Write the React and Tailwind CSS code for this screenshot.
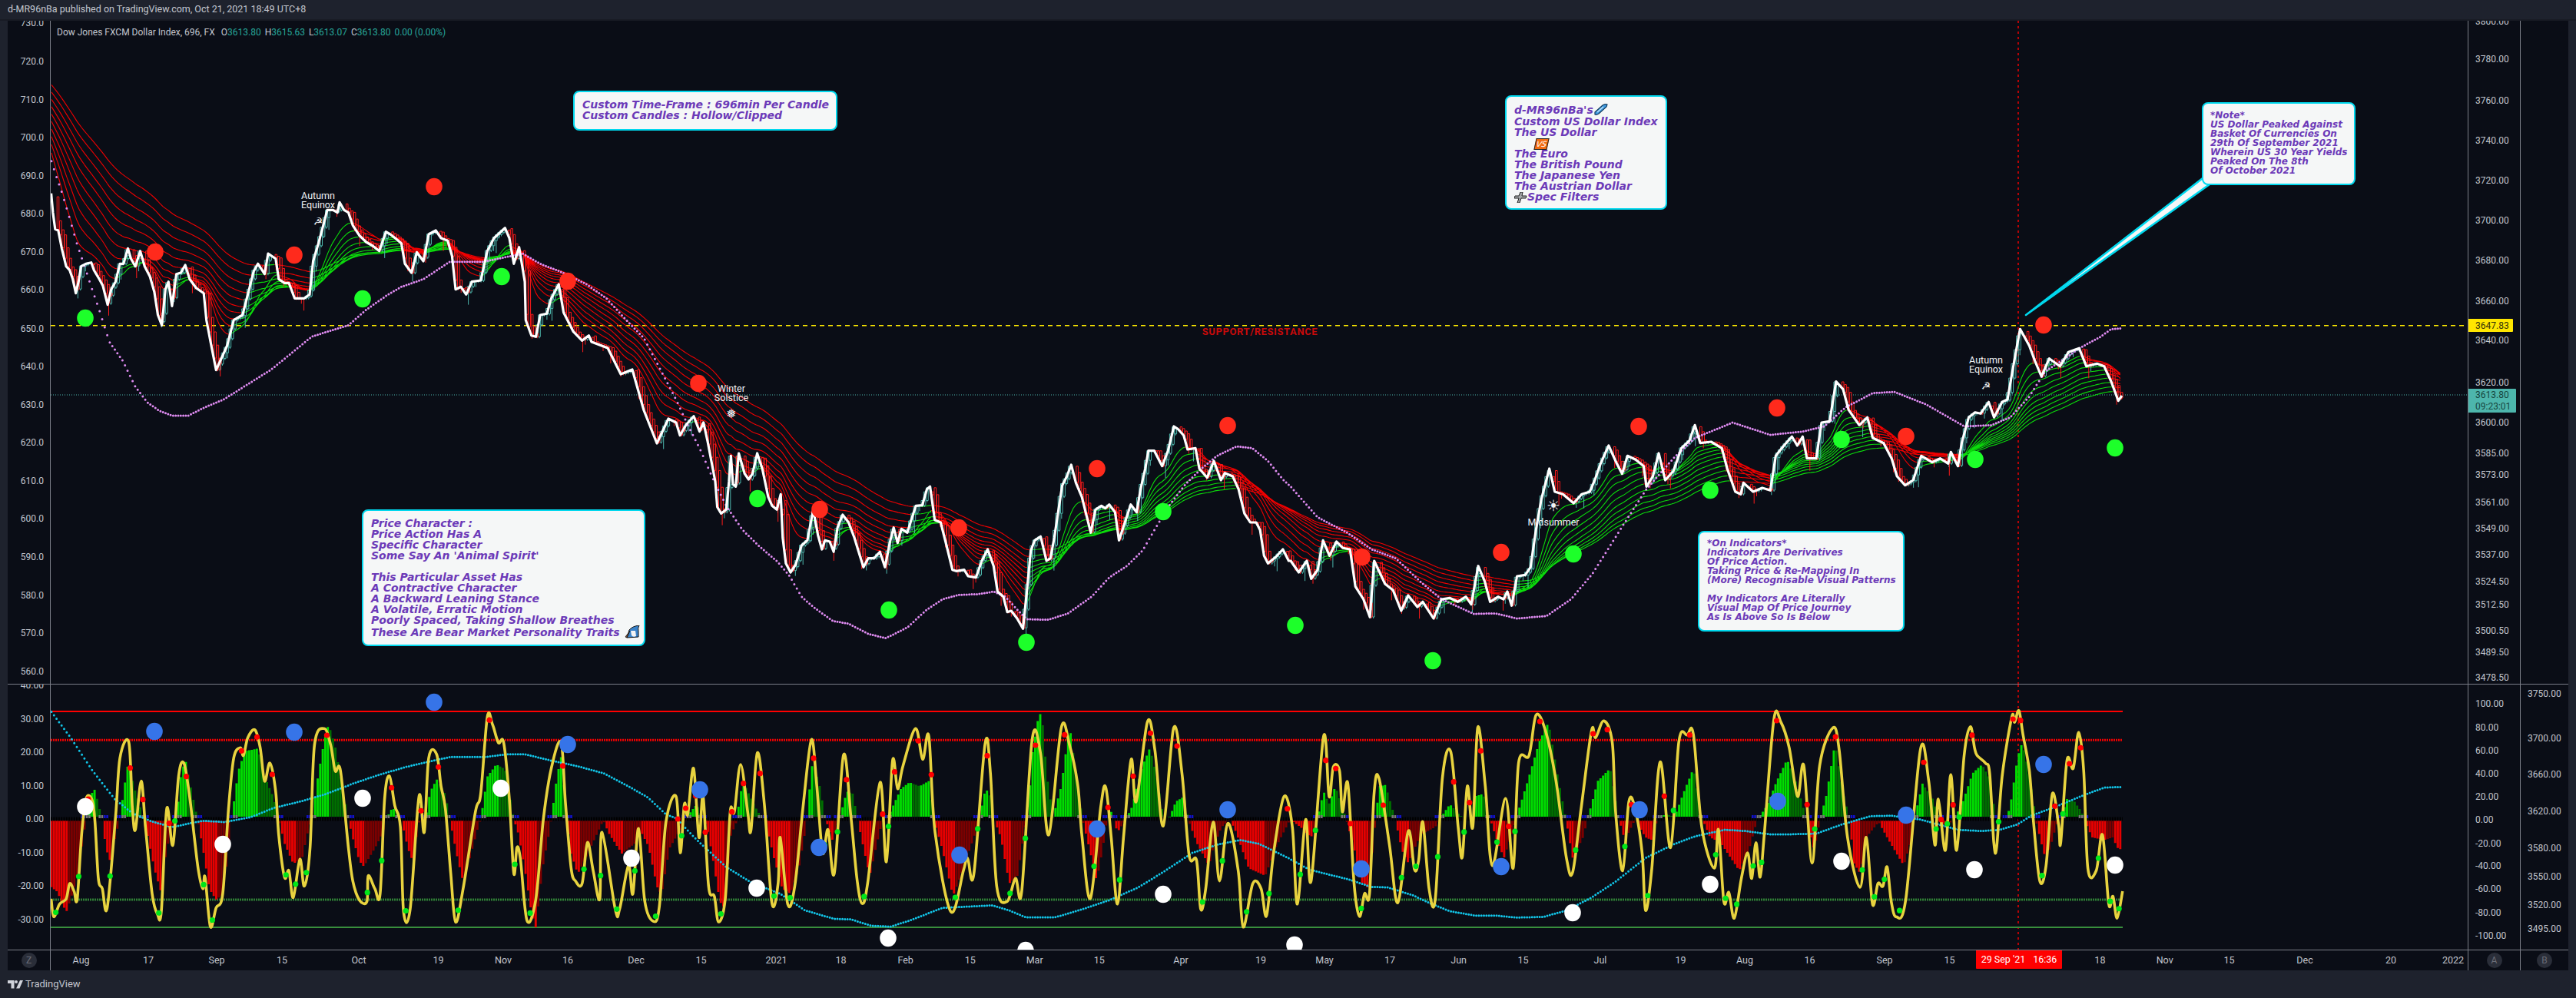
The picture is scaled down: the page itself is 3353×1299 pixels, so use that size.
const pairs = (flat) => {
  const out = [];
  for (let i = 0; i < flat.length; i += 2) out.push([flat[i], flat[i + 1]]);
  return out;
};

// values were read off crops of the chart, so each block has its own origin and x scale
const crop = (x0, y0, sx, flat) => pairs(flat).map(([x, y]) => [x0 + x / sx, y0 + y / 3]);

const PRICE = [
  ...crop(0, 0, 1.742, [116,755,120,830,125,895,132,900,140,970,150,1040,158,1055,165,1090,172,1145,178,1100,184,1040,195,1030,207,1025,213,1055,225,1090,233,1115,244,1190,252,1130,262,1100,272,1030,280,1030,290,970,297,1010,307,1040,318,980,328,1040,340,1080,350,1140,358,1230,367,1270,375,1130,382,1100,390,1195,400,1070,410,1065,420,1035,430,1090,445,1125,462,1145,468,1250,478,1340,490,1445,515,1350,530,1250,550,1230,565,1130,575,1060,585,1030,600,1070,608,990,625,1010,632,1090,645,1105,655,1105,668,1165,690,1165,702,1150,710,1020,722,950,733,880,742,820,755,820,765,830,770,790,780,820,790,830,800,880,815,920,830,945,845,960,860,980,875,905,885,915,900,935,910,950,918,1030,933,1065,945,985,960,1020,972,915,988,900,1000,930,1015,940,1025,1000,1033,1130,1045,1120,1057,1150,1070,1100,1090,1095,1105,980,1120,930,1145,890,1155,930,1165,1030,1177,965,1190,1100,1192,1250,1205,1310,1215,1315,1225,1230,1240,1225,1250,1165,1267,1110,1278,1220,1300,1295,1320,1330,1335,1310]),
  ...pairs([770,445,791,453,808,487,823,481,838,534,855,577,870,545]),
  ...crop(880, 440, 1.96, [0,330,10,380,25,340,45,305,60,365,70,330,80,400,90,480,100,560,105,660,115,685,128,670,135,560,140,460,145,570,152,580,160,450,175,530,185,552,195,530,207,450,220,510,235,620,245,655,257,670,267,610,272,780,280,880,292,915,305,885,320,810,335,790,350,670,362,770,372,825,380,790,392,795,402,835,412,740,425,690,440,720,455,780,465,830,478,895,490,860,505,860,520,835,533,895,545,800,555,740,565,800,575,745,590,760,600,710,612,655,628,653,640,590,648,580,660,710,675,720,690,810,705,905,715,910,735,905,745,930,765,935,780,870,795,825,810,890,820,990,835,1010,845,1070,855,1065,870,1095,885,1135,895,990,905,830,915,790,930,775,945,870,955,860,965,780,985,575,997,540,1008,495,1020,565,1035,620,1058,760,1070,670,1085,655,1095,665,1105,650,1120,680,1130,790,1145,720,1160,650,1175,680,1185,590,1197,510,1205,440,1220,440,1240,500,1255,440,1270,345,1280,355,1295,380,1305,435,1325,430,1335,510,1355,545,1372,480,1390,555,1400,527,1420,540,1435,590,1450,685,1465,720,1480,720,1490,750,1500,850,1510,880,1530,855,1548,825,1563,870]),
  ...crop(1680, 440, 1.4255, [0,870,15,915,30,870,38,940,50,905,60,790,72,850,85,795,97,820,110,825,120,970,135,1020,147,1090,155,870,175,960,190,985,205,1065,218,1005,235,1050,245,1030,265,1095,280,1020,295,1015,310,1030,325,1010,335,1040,348,890,360,950,370,1030,385,1010,395,1020,402,990,410,1045,420,930,435,925,445,895,455,750,465,630,480,510,490,600,505,610,525,645,540,610,555,600,565,550,575,490,590,420,605,490,615,530,625,460,640,475,655,500,660,580,672,540,683,450,695,555,710,520,725,430,740,400,750,340,760,410,780,405,800,430,810,510,825,600,835,610,840,565,858,600,875,585,890,595,900,460,915,420,930,385,940,420,950,385,958,470,975,470,985,330,1000,325,1012,170,1025,200,1035,280,1055,340,1070,310,1080,390,1100,410,1115,470,1125,540,1140,575,1155,555,1170,460,1190,485,1205,470,1220,490,1225,445,1238,500,1245,410,1258,310,1270,290,1280,295,1295,250,1305,310,1320,250,1330,240,1340,120]),
  ...crop(1900, 100, 1.079, [787,985,800,1050,808,1110,817,1170,828,1100,843,1130,855,1075,870,1060,880,1130,895,1120,905,1130,915,1190,925,1265,930,1245]),
];

const PINK = [
  ...crop(0, 0, 1.742, [116,625,125,675,140,750,155,835,175,955,190,1030,205,1110,225,1210,248,1335]),
  ...pairs([160,470,176,503,192,524,208,535,224,541,245,541,267,530,291,520,353,481,406,438]),
  ...crop(0, 0, 1.742, [790,1270,830,1210,880,1150,910,1120,960,1090,1020,1022,1095,1022,1130,1010,1185,990,1225,1030,1270,1060,1330,1110,1375,1165,1420,1250,1460,1320]),
  ...crop(880, 440, 1.96, [0,240,30,340,60,430,100,570,130,660,170,750,210,810,260,875,290,930,320,1010,350,1050,400,1105,440,1115,490,1155,535,1172,590,1130,640,1060,680,1020,720,1003,770,1000,810,990,840,1010,870,1060,895,1098,950,1100,1000,1075,1060,1010,1105,935,1150,890,1190,830,1220,750,1260,650,1300,570,1340,510,1380,460,1430,423,1470,430,1510,480,1550,555]),
  ...crop(1680, 440, 1.4255, [0,580,50,700,105,760,150,825,195,860,240,950,280,1020,340,1077,380,1075,420,1095,475,1085,520,1020,560,920,620,720,660,590,710,470,750,390,820,330,890,378,950,365,990,345,1030,270,1080,215,1120,210,1180,260,1250,345,1300,340,1335,310,1370,230,1400,130,1440,75]),
  ...crop(1900, 100, 1.079, [870,1060,900,1015,915,985,930,982]),
];

const HIST = [
  ...crop(0, 871, 1.742, [116,850,130,870,150,950,160,900,172,830,185,700,195,586,205,490,215,470,225,540,232,586,240,700,250,750,262,650,272,586,280,480,292,350,302,450,315,520,325,586,335,650,350,780,365,870,378,700,392,620,400,586,410,420,420,350,435,480,448,586,460,700,475,860,490,900,505,880,515,750,525,586,540,400,555,320,585,310,600,420,620,500,632,586,645,680,665,760,685,740,700,620,708,586,720,430,735,280,745,215,760,300,775,450,790,586,800,660,815,750,825,770,850,700,868,640,875,586,890,540,900,560,910,586,925,700,938,760,948,600,965,586,975,480,990,430,1010,490,1020,586,1035,720,1050,830,1065,740,1082,630,1090,586,1105,420,1125,372,1145,390,1165,586,1175,640,1190,780,1205,950,1215,1010,1230,780,1245,640,1250,586,1262,430,1272,340,1285,586,1295,720,1310,800,1330,730,1352,650,1368,590,1380,640,1410,720,1440,680,1452,630,1470,690,1490,850,1500,880,1518,700]),
  ...crop(880, 890, 1.845, [35,500,50,470,62,522,75,560,90,700,105,850,118,880,130,600,145,540,150,480,160,380,175,430,190,480,205,522,215,540,235,680,255,800,275,820,295,720,315,530,320,420,328,300,345,400,358,522,375,610,390,540,400,480,410,420,425,430,435,522,450,640,465,750,480,640,495,540,510,522,520,480,540,410,560,385,585,400,607,380,618,522,640,650,665,830,690,720,715,600,728,530,740,430,750,410,762,522,780,600,800,780,820,750,838,560,845,522,855,280,870,130,878,110,890,350,905,522,925,400,945,160,960,350,975,522,995,660,1010,770,1025,640,1035,530,1045,500,1060,580,1080,530,1095,480,1120,320,1138,250,1155,370,1170,522,1185,522,1200,460,1220,440,1230,530,1250,620,1280,710,1290,640,1310,560,1330,530,1345,580,1375,720,1415,750,1440,640,1475,530,1500,560,1525,600,1540,530,1555,420,1568,470]),
  ...crop(1730, 890, 1.845, [15,400,40,522,60,640,75,770,95,800,112,530,120,400,135,395,158,522,175,650,190,700,220,590,255,560,265,530,290,470,315,515,340,530,350,440,370,430,387,530,405,620,420,680,440,580,452,510,475,390,505,225,527,150,550,370,568,522,585,680,610,600,622,520,645,380,675,330,695,522,710,610,735,530,760,600,775,610,790,520,810,510,830,520,850,430,875,330,895,522,915,600,940,620,985,730,1010,640,1028,530,1050,480,1075,380,1100,295,1125,400,1145,522,1165,650,1180,522,1195,430,1215,230,1235,430,1250,530,1260,700,1275,740,1290,600,1320,540,1340,600,1380,710,1400,600,1405,530,1425,390,1450,450,1465,530,1480,560,1500,530,1520,470,1545,350,1568,315]),
  ...crop(2500, 870, 1.838, [165,430,180,590,205,590,215,530,232,345,243,290,258,400,270,520,275,590,290,690,298,740,310,700,325,610,335,590,350,510,368,520,385,560,392,590,410,660,440,670,460,660,470,700,485,712]),
];

const OSC = [
  ...crop(0, 870, 1.742, [116,900,122,970,135,920,150,900,158,840,168,870,175,900,185,650,195,510,208,510,215,590,223,820,232,860,243,935,262,580,272,350,292,288,300,540,307,630,320,440,330,620,345,880,357,960,366,945,378,548,392,690,405,420,417,370,430,500,440,650,450,790,460,860,465,815,477,1008,490,935,505,880,518,550,530,350,545,310,552,340,562,270,578,240,590,310,600,440,612,370,625,480,632,650,645,815,655,790,665,895,680,745,690,850,703,700,713,300,735,235,750,300,760,400,772,400,790,700,800,830,815,905,832,910,835,810,850,860,862,880,872,510,883,420,895,535,908,620,915,950,930,940,950,500,962,640,972,350,990,335,1000,460,1010,550,1022,800,1033,990,1050,860,1078,560,1090,490,1105,190,1117,220,1130,290,1142,290,1155,510,1165,800,1172,700,1180,745,1195,985,1215,900,1232,590,1250,390,1272,288,1282,520,1295,780,1305,830,1320,840,1332,680,1345,790,1360,900,1365,640,1395,940,1405,940,1425,770,1435,880,1448,625,1462,910,1482,988,1495,930,1510,600]),
  ...crop(880, 890, 1.845, [0,440,10,660,20,470,28,510,42,330,55,600,65,440,78,790,92,830,102,930,118,840,130,500,140,500,155,315,172,500,180,570,195,270,212,470,230,855,245,780,250,600,268,860,285,790,305,480,325,218,338,400,352,660,365,570,380,740,402,278,420,520,435,770,447,858,460,780,490,385,505,695,520,300,532,410,545,320,575,175,592,295,607,205,622,580,660,890,690,730,700,680,715,745,742,235,755,350,770,790,795,850,815,760,830,810,855,220,875,270,895,590,925,172,945,240,965,400,975,600,995,838,1020,480,1032,405,1045,600,1060,860,1075,590,1093,295,1105,460,1132,148,1150,260,1170,555,1195,172,1215,350,1232,670,1250,690,1260,880,1272,800,1290,540,1305,770,1325,545,1350,730,1362,950,1385,780,1405,800,1418,905,1435,660,1460,440,1480,560,1492,860,1512,530,1525,770,1555,205]),
  ...crop(1730, 890, 1.845, [0,440,10,325,25,340,32,500,45,390,60,780,73,908,85,820,97,820,108,430,120,370,145,630,165,855,190,575,205,725,215,690,225,540,240,800,255,840,272,370,292,265,310,560,320,675,332,400,345,560,357,170,375,400,392,710,424,448,442,720,455,310,480,280,497,122,520,185,545,380,570,680,585,735,605,490,630,185,640,210,660,145,680,230,688,500,705,730,720,460,735,490,752,665,760,885,775,720,795,305,820,640,840,225,860,200,875,200,895,560,925,720,935,570,948,850,960,815,973,915,990,760,1005,660,1015,760,1025,620,1035,755,1045,590,1068,140,1085,150,1105,250,1125,440,1140,320,1160,700,1178,320,1210,172,1225,260,1245,600,1275,795,1290,600,1305,860,1318,780,1330,790,1340,715,1350,850,1362,910,1385,840,1420,258,1440,380,1455,630,1463,450,1480,650,1493,355,1507,650,1525,280,1540,168,1550,250]),
  ...crop(2500, 870, 1.838, [135,340,155,370,165,410,175,680,182,695,195,420,218,190,225,210,235,165,245,260,260,400,270,600,285,830,300,770,315,490,330,610,335,680,350,360,365,390,378,250,390,400,400,780,420,790,435,650,450,920,460,890,470,975,483,870]),
];

const CYAN = [
  ...crop(0, 870, 1.742, [116,168,160,270,210,400,260,510,300,565,340,595,390,620,430,605,460,595,510,600,570,580,620,545,680,520,740,490,800,450,860,415,920,385,970,365,1020,346,1100,346,1150,335,1190,335,1250,360,1310,382,1370,410,1430,465,1470,505,1510,570]),
  ...crop(880, 890, 1.845, [0,525,50,610,120,715,180,775,250,820,310,885,380,918,420,920,470,945,515,948,560,925,640,875,700,870,760,865,800,885,840,912,910,912,980,878,1040,845,1110,795,1170,735,1240,660,1300,628,1355,610,1400,625,1470,680,1520,725]),
  ...crop(1730, 890, 1.845, [0,745,50,765,100,793,140,795,200,825,240,855,290,888,350,905,400,905,450,913,515,910,570,885,630,835,690,770,760,680,830,625,880,595,950,570,1000,575,1060,588,1100,588,1170,585,1230,550,1300,517,1350,515,1420,530,1510,570,1568,575]),
  ...crop(2500, 870, 1.838, [190,630,230,610,265,575,330,535,390,495,440,465,483,463]),
];

const RED_DOTS = pairs([202,328,383,332,565,243,739,366,909,499,1067,663,1248,687,1428,610,1598,554,1773,725,1954,719,2133,555,2313,531,2481,568,2660,423]);
const GREEN_DOTS = pairs([111,414,472,389,653,360,986,649,1157,794,1336,836,1514,666,1686,814,1865,860,2048,721,2226,638,2397,572,2571,598,2753,583]);
const BLUE_DOTS = pairs([201,952,383,953,565,914,739,969,911,1028,1066,1103,1249,1113,1428,1079,1598,1054,1772,1131,1954,1128,2134,1054,2314,1043,2481,1061,2660,995]);
const WHITE_DOTS = pairs([111,1050,290,1099,472,1039,652,1026,822,1117,985,1156,1156,1221,1335,1237,1514,1164,1685,1230,2047,1188,2226,1151,2397,1121,2570,1132,2753,1126]);

const STEP = 3.3;
const START = 66;
const END = 2763;
const BARS = [];
for (let x = START + 1; x <= END; x += STEP) BARS.push(x);

const interp = (pts, x) => {
  if (x <= pts[0][0]) return pts[0][1];
  for (let i = 1; i < pts.length; i++) {
    if (x <= pts[i][0]) {
      const [x0, y0] = pts[i - 1];
      const [x1, y1] = pts[i];
      return y0 + ((y1 - y0) * (x - x0)) / (x1 - x0 || 1);
    }
  }
  return pts[pts.length - 1][1];
};

const poly = (pts) => pts.map((p) => `${p[0].toFixed(1)},${p[1].toFixed(1)}`).join(" ");

const smooth = (pts) => {
  let d = `M${pts[0][0].toFixed(1)} ${pts[0][1].toFixed(1)}`;
  for (let i = 0; i < pts.length - 1; i++) {
    const a = pts[i - 1] || pts[i];
    const b = pts[i];
    const c = pts[i + 1];
    const e = pts[i + 2] || c;
    const k = 6;
    d += `C${(b[0] + (c[0] - a[0]) / k).toFixed(1)} ${(b[1] + (c[1] - a[1]) / k).toFixed(1)} ${(c[0] - (e[0] - b[0]) / k).toFixed(1)} ${(c[1] - (e[1] - b[1]) / k).toFixed(1)} ${c[0].toFixed(1)} ${c[1].toFixed(1)}`;
  }
  return d;
};

const dots = (pts) =>
  BARS.filter((x) => x >= pts[0][0] && x <= pts[pts.length - 1][0])
    .map((x) => `M${x.toFixed(1)} ${interp(pts, x).toFixed(1)}h0`)
    .join("");

const PRICE_Y = BARS.map((x) => interp(PRICE, x));

function buildRibbon() {
  const periods = [14, 20, 26, 33, 40, 48, 56, 65, 75, 86];
  const paths = { red: "", darkRed: "", green: "", darkGreen: "" };
  periods.forEach((n, k) => {
    let e = 190 - (k * 83) / (periods.length - 1);
    const a = 2 / (n + 1);
    BARS.forEach((x, i) => {
      const next = e + a * (PRICE_Y[i] - e);
      const dy = next - e;
      const key = dy > 0.05 ? "red" : dy > 0 ? "darkRed" : dy < -0.05 ? "green" : "darkGreen";
      if (i > 0) paths[key] += `M${(x - STEP).toFixed(1)} ${e.toFixed(1)}L${x.toFixed(1)} ${next.toFixed(1)}`;
      e = next;
    });
  });
  return paths;
}

function buildCandles() {
  let up = "";
  let down = "";
  BARS.forEach((x, i) => {
    if (i < 2) return;
    const o = PRICE_Y[i - 2];
    const c = PRICE_Y[i];
    const wick = (i * 7) % 11 === 0 ? 16 : (i * 5) % 7 === 0 ? 7 : 2;
    const top = Math.min(o, c);
    const bottom = Math.max(o, c);
    const left = c < o ? x - 3.2 : x + 0.6;
    const box = `M${left.toFixed(1)} ${top.toFixed(1)}h2.6V${bottom.toFixed(1)}h-2.6zM${(left + 1.3).toFixed(1)} ${bottom.toFixed(1)}v${wick}`;
    if (c < o) up += box;
    else down += box;
  });
  return { up, down };
}

function buildHist() {
  const paths = { green: "", darkGreen: "", red: "", darkRed: "" };
  const base = 1066;
  const vals = BARS.map((x) => interp(HIST, x));
  vals.forEach((y, i) => {
    const x = BARS[i].toFixed(1);
    const grows = i === 0 || Math.abs(y - base) >= Math.abs(vals[i - 1] - base);
    if (y < base - 2) paths[grows ? "green" : "darkGreen"] += `M${x} 1063V${y.toFixed(1)}`;
    else if (y > base + 2) paths[grows ? "red" : "darkRed"] += `M${x} 1068V${y.toFixed(1)}`;
  });
  let blue = "";
  let grey = "";
  vals.forEach((y, i) => {
    const near = vals.slice(Math.max(0, i - 2), i + 3).some((v) => Math.sign(v - base) !== Math.sign(y - base));
    if (!near) return;
    const mark = `M${BARS[i].toFixed(1)} 1061v4`;
    if (y < base) grey += mark;
    else blue += mark;
  });
  return { ...paths, blue, grey };
}

function turningDots() {
  const red = [];
  const green = [];
  OSC.forEach((p, i) => {
    const a = OSC[i - 1];
    const b = OSC[i + 1];
    if (!a || !b) return;
    if (p[1] < a[1] && p[1] <= b[1] && p[1] < 1065) {
      red.push([p[0] + (b[0] - p[0]) * 0.4, p[1] + (b[1] - p[1]) * 0.4]);
    } else if (p[1] > a[1] && p[1] >= b[1] && p[1] > 1095) {
      green.push([p[0] + (b[0] - p[0]) * 0.35, p[1] + (b[1] - p[1]) * 0.35]);
    }
  });
  return { red, green };
}

const RIBBON = buildRibbon();
const CANDLES = buildCandles();
const BARS_OSC = buildHist();
const TURNS = turningDots();

const LEFT_TOP = [[730,30],[720,80],[710,130],[700,179],[690,229],[680,278],[670,328],[660,377],[650,428],[640,477],[630,527],[620,576],[610,626],[600,675],[590,725],[580,775],[570,824],[560,874]];
const LEFT_OSC = [["40.00",892],["30.00",936],["20.00",979],["10.00",1023],["0.00",1066],["-10.00",1110],["-20.00",1153],["-30.00",1197]];
const RIGHT_TOP = [["3800.00",28],["3780.00",77],["3760.00",131],["3740.00",183],["3720.00",235],["3700.00",287],["3680.00",339],["3660.00",392],["3640.00",443],["3620.00",498],["3600.00",550],["3585.00",590],["3573.00",618],["3561.00",654],["3549.00",688],["3537.00",722],["3524.50",757],["3512.50",787],["3500.50",821],["3489.50",849],["3478.50",882]];
const RIGHT_OSC = [["100.00",916],["80.00",947],["60.00",977],["40.00",1007],["20.00",1037],["0.00",1067],["-20.00",1098],["-40.00",1127],["-60.00",1157],["-80.00",1188],["-100.00",1218]];
const FAR_OSC = [["3750.00",903],["3700.00",961],["3660.00",1008],["3620.00",1056],["3580.00",1104],["3550.00",1141],["3520.00",1178],["3495.00",1209]];
const TIME = [["Aug",105.6],["17",193],["Sep",282],["15",367],["Oct",467],["19",570.6],["Nov",655],["16",739],["Dec",828],["15",912.5],["2021",1010.6],["18",1094.6],["Feb",1178.6],["15",1262.7],["Mar",1346.7],["15",1430.7],["Apr",1537],["19",1641],["May",1724],["17",1809],["Jun",1898.6],["15",1982.6],["Jul",2083],["19",2187.5],["Aug",2271],["16",2355.5],["Sep",2453],["15",2537.6],["18",2733.4],["Nov",2817.7],["15",2901.5],["Dec",3000],["20",3112],["2022",3193]];

const sans = "font-[family-name:Roboto,sans-serif]";

const Ticks = ({ items, top, className }) => (
  <>
    {items.map(([label, y]) => (
      <span
        key={label + y}
        className={`absolute -translate-y-1/2 whitespace-nowrap text-[12px] leading-none text-[#c3c6ce] ${className}`}
        style={{ top: y - top }}
      >
        {label}
      </span>
    ))}
  </>
);

const Ball = ({ pts, fill }) => (
  <g fill={fill}>
    {pts.map(([x, y]) => (
      <ellipse key={x} cx={x} cy={y} rx="10.8" ry="11.2" />
    ))}
  </g>
);

const Season = ({ x, y, lines, glyph, glyphY, glyphSize = 14 }) => (
  <g fill="#f2f3f5" textAnchor="middle" fontSize="12.5">
    {lines.map((l, i) => (
      <text key={l} x={x} y={y + i * 12}>
        {l}
      </text>
    ))}
    <text x={x} y={glyphY} fontSize={glyphSize} fontFamily="DejaVu Sans">
      {glyph}
    </text>
  </g>
);

const Legend = () => (
  <div className="absolute top-[8px] left-[8px] flex gap-[5px] whitespace-nowrap text-[12px] leading-[14px] text-[#c3c6ce]">
    <span className="mr-[3px]">Dow Jones FXCM Dollar Index, 696, FX</span>
    <span>O<span className="text-[#26a69a]">3613.80</span></span>
    <span>H<span className="text-[#26a69a]">3615.63</span></span>
    <span>L<span className="text-[#26a69a]">3613.07</span></span>
    <span>C<span className="text-[#26a69a]">3613.80</span></span>
    <span className="text-[#26a69a]">0.00 (0.00%)</span>
  </div>
);

const note = "absolute rounded-lg border-2 border-[#00d8ee] bg-[#f5f7f7] whitespace-pre italic font-bold text-[#6c3ab8] font-[family-name:'DejaVu_Sans',sans-serif]";

const PencilIcon = () => (
  <svg width="20" height="16" viewBox="0 0 20 16" className="inline-block align-[-3px]">
    <path d="M2 11 L12 2 Q16 0 18 1 L17 4 L7 13 Q4 15 2 14 Z" fill="#3f9be0" stroke="#123a5c" strokeWidth="1.2" />
    <path d="M5 11 L13 4" stroke="#bfe3fa" strokeWidth="1.5" />
  </svg>
);

const PlusIcon = () => (
  <svg width="17" height="14" viewBox="0 0 17 14" className="inline-block align-[-3px]">
    <path d="M6 5 L8 0 H11 L10 5 H16 L15 8 H9 L7 14 H4 L6 8 H0 L1 5 Z" fill="#a3a6a8" stroke="#222" strokeWidth="1" />
  </svg>
);

const WizardIcon = () => (
  <svg width="20" height="17" viewBox="0 0 20 17" className="ml-[6px] inline-block align-[-3px]">
    <path d="M6 6 Q10 1 19 0 Q17 3 18 8 L18 15 L3 16 Q5 11 6 6 Z" fill="#3a82c8" stroke="#111" strokeWidth="1" />
    <path d="M8 7 H14 L15 14 Q11 16 9 13 Z" fill="#f4f4f4" />
    <path d="M7 7 L3 16 L1 15 Z" fill="#7a4a2c" stroke="#111" strokeWidth="0.8" />
  </svg>
);

const TvLogo = () => (
  <svg width="20" height="11" viewBox="0 0 20 11" className="fill-[#d1d4dc]">
    <path d="M0 0h8.5v10.5h-4V4H0z" />
    <circle cx="11" cy="2" r="2" />
    <path d="M16 0h4l-4.6 10.5h-4.3z" />
  </svg>
);

const CornerBadge = ({ label }) => (
  <span className="flex h-[20px] w-[20px] items-center justify-center rounded-full bg-[#2a2e39] text-[12px] text-[#6a6d78]">
    {label}
  </span>
);

const TopPlot = () => (
  <div className="relative min-w-0 flex-1 overflow-hidden">
    <svg width="3146" height="863" viewBox="66 27 3146 863" className="block">
      <line x1="66" x2="3212" y1="423.7" y2="423.7" stroke="#ffeb00" strokeWidth="1.4" strokeDasharray="6 5" />
      <line x1="66" x2="3212" y1="514" y2="514" stroke="#4db6ac" strokeWidth="1" strokeDasharray="1 2" />
      <line x1="2627" x2="2627" y1="27" y2="890" stroke="#ff0000" strokeWidth="1.4" strokeDasharray="3 4" />

      <g fill="none" strokeWidth="1.1">
        <path d={RIBBON.darkGreen} stroke="#0a6e0a" />
        <path d={RIBBON.darkRed} stroke="#7d0505" />
        <path d={RIBBON.green} stroke="#0bdc0b" />
        <path d={RIBBON.red} stroke="#f00000" />
      </g>
      <g fill="none" strokeWidth="1">
        <path d={CANDLES.up} stroke="#4db6ac" />
        <path d={CANDLES.down} stroke="#ff1a1a" />
      </g>
      <path d={dots(PINK)} fill="none" stroke="#e08cf2" strokeWidth="3" strokeLinecap="round" />
      <polyline points={poly(PRICE)} fill="none" stroke="#ffffff" strokeWidth="3.2" strokeLinejoin="round" />

      <Ball pts={RED_DOTS} fill="#ff2a1c" />
      <Ball pts={GREEN_DOTS} fill="#1dff2a" />

      <Season x={414} y={259} lines={["Autumn", "Equinox"]} glyph="☭" glyphY={293} />
      <Season x={952} y={510} lines={["Winter", "Solstice"]} glyph="❅" glyphY={544} glyphSize={16} />
      <Season x={2022} y={684} lines={["Midsummer"]} glyph="☀" glyphY={665} glyphSize={20} />
      <Season x={2585} y={473} lines={["Autumn", "Equinox"]} glyph="☭" glyphY={507} />

      <text x="1640" y="436" textAnchor="middle" fontSize="13" fontWeight="700" fill="#c80a0a" letterSpacing="0.6">
        SUPPORT/RESISTANCE
      </text>

      <polygon points="2637,410 2867,232 2876,240" fill="#f5f7f7" stroke="#00d8ee" strokeWidth="2.5" strokeLinejoin="round" />
    </svg>

    <Legend />

    <div className={`${note} top-[91px] left-[680px] h-[52px] w-[344px] pt-[9px] pl-[10px] text-[14px] leading-[14px]`}>
      {"Custom Time-Frame : 696min Per Candle\nCustom Candles : Hollow/Clipped"}
    </div>

    <div className={`${note} top-[97px] left-[1893px] h-[149px] w-[211px] pt-[9px] pl-[10px] text-[14px] leading-[14px]`}>
      <div>d-MR96nBa's<PencilIcon /></div>
      <div>Custom US Dollar Index</div>
      <div>The US Dollar</div>
      <div className="h-[14px] pl-[27px]">
        <span className="inline-block h-[15px] w-[17px] -skew-x-12 border border-[#222] bg-[#f26b10] text-center text-[10px] leading-[13px] font-normal text-white">VS</span>
      </div>
      <div>The Euro</div>
      <div>The British Pound</div>
      <div>The Japanese Yen</div>
      <div>The Austrian Dollar</div>
      <div><PlusIcon />Spec Filters</div>
    </div>

    <div className={`${note} top-[106px] left-[2800px] h-[108px] w-[200px] pt-[9px] pl-[9px] text-[12px] leading-[12px]`}>
      {"*Note*\nUS Dollar Peaked Against\nBasket Of Currencies On\n29th Of September 2021\nWherein US 30 Year Yields\nPeaked On The 8th\nOf October 2021"}
    </div>

    <div className={`${note} top-[636px] left-[405px] h-[178px] w-[369px] pt-[9px] pl-[10px] text-[14px] leading-[14px]`}>
      {"Price Character :\nPrice Action Has A\nSpecific Character\nSome Say An 'Animal Spirit'\n\nThis Particular Asset Has\nA Contractive Character\nA Backward Leaning Stance\nA Volatile, Erratic Motion\nPoorly Spaced, Taking Shallow Breathes\nThese Are Bear Market Personality Traits"}
      <WizardIcon />
    </div>

    <div className={`${note} top-[664px] left-[2144px] h-[131px] w-[269px] pt-[8px] pl-[10px] text-[12px] leading-[12px]`}>
      {"*On Indicators*\nIndicators Are Derivatives\nOf Price Action.\nTaking Price & Re-Mapping In\n(More) Recognisable Visual Patterns\n\nMy Indicators Are Literally\nVisual Map Of Price Journey\nAs Is Above So Is Below"}
    </div>
  </div>
);

const OscPlot = () => (
  <div className="relative min-w-0 flex-1 overflow-hidden">
    <svg width="3146" height="345" viewBox="66 891 3146 345" className="block">
      <line x1="2627" x2="2627" y1="891" y2="1236" stroke="#ff0000" strokeWidth="1.4" strokeDasharray="3 4" />
      <line x1="66" x2={END} y1="926" y2="926" stroke="#ff0000" strokeWidth="2.2" />
      <line x1="66" x2={END} y1="963.3" y2="963.3" stroke="#ee0000" strokeWidth="3" strokeDasharray="2 1" />
      <line x1="66" x2={END} y1="1171" y2="1171" stroke="#2f7f35" strokeWidth="3" strokeDasharray="2 1" />
      <line x1="66" x2={END} y1="1207" y2="1207" stroke="#388e3c" strokeWidth="2.2" />

      <g fill="none" strokeWidth="2.9">
        <path d={BARS_OSC.green} stroke="#00dc00" />
        <path d={BARS_OSC.darkGreen} stroke="#006f00" />
        <path d={BARS_OSC.red} stroke="#e60000" />
        <path d={BARS_OSC.darkRed} stroke="#7c0000" />
      </g>
      <line x1="66" x2={END} y1="1066" y2="1066" stroke="#000000" strokeWidth="5" strokeDasharray="2 1.3" />
      <g fill="none" strokeWidth="2.6">
        <path d={BARS_OSC.blue} stroke="#1111cc" />
        <path d={BARS_OSC.grey} stroke="#777777" />
      </g>

      <path d={dots(CYAN)} fill="none" stroke="#12c5e8" strokeWidth="3" strokeLinecap="round" />
      <path d={smooth(OSC)} fill="none" stroke="#e8d33f" strokeWidth="3.6" strokeLinejoin="round" />

      <g fill="#ff0000">
        {TURNS.red.map(([x, y]) => (
          <circle key={x} cx={x} cy={y} r="3.6" />
        ))}
      </g>
      <g fill="#00e61a">
        {TURNS.green.map(([x, y]) => (
          <circle key={x} cx={x} cy={y} r="3.6" />
        ))}
      </g>

      <Ball pts={BLUE_DOTS} fill="#3674e8" />
      <Ball pts={WHITE_DOTS} fill="#ffffff" />
    </svg>
  </div>
);

export default function App() {
  return (
    <div className={`flex h-[1299px] w-[3353px] flex-col overflow-hidden bg-[#1e222d] ${sans}`}>
      <header className="flex h-[27px] shrink-0 items-center border-b-2 border-[#181b24] pl-[10px] text-[12.5px] text-[#c3c6ce]">
        d-MR96nBa published on TradingView.com, Oct 21, 2021 18:49 UTC+8
      </header>

      <main className="ml-[10px] mr-[10px] flex h-[1236px] shrink-0 flex-col bg-[#0a0d16]">
        <section className="flex h-[864px] shrink-0 border-b border-[#7b7e88]">
          <div className="relative w-[56px] shrink-0 overflow-hidden border-r border-[#7b7e88]">
            <Ticks items={LEFT_TOP.map(([v, y]) => [`${v}.0`, y])} top={27} className="right-[8px]" />
          </div>
          <TopPlot />
          <div className="relative w-[68px] shrink-0 overflow-hidden border-l border-[#7b7e88]">
            <Ticks items={RIGHT_TOP} top={27} className="left-[9px]" />
            <div className="absolute top-[388px] left-0 flex h-[17px] w-[58px] items-center rounded-r-[1px] bg-[#ffe600] pl-[9px] text-[12px] text-[#33300a]">
              3647.83
            </div>
            <div className="absolute top-[479px] left-0 flex h-[31px] w-[62px] flex-col justify-center rounded-r-[1px] bg-[#4db6ac] pl-[9px] text-[12px] leading-[15px] text-[#17463f]">
              <span>3613.80</span>
              <span>09:23:01</span>
            </div>
          </div>
          <div className="w-[63px] shrink-0 border-l border-[#7b7e88]" />
        </section>

        <section className="flex h-[346px] shrink-0 border-b border-[#7b7e88]">
          <div className="relative w-[56px] shrink-0 overflow-hidden border-r border-[#7b7e88]">
            <Ticks items={LEFT_OSC} top={891} className="right-[8px]" />
          </div>
          <OscPlot />
          <div className="relative w-[68px] shrink-0 overflow-hidden border-l border-[#7b7e88]">
            <Ticks items={RIGHT_OSC} top={891} className="left-[9px]" />
          </div>
          <div className="relative w-[63px] shrink-0 overflow-hidden border-l border-[#7b7e88]">
            <Ticks items={FAR_OSC} top={891} className="left-[9px]" />
          </div>
        </section>

        <section className="flex h-[26px] shrink-0">
          <div className="flex w-[56px] shrink-0 items-center justify-center border-r border-[#7b7e88]">
            <CornerBadge label="Z" />
          </div>
          <div className="relative min-w-0 flex-1 text-[12.5px] leading-[26px] text-[#c3c6ce]">
            {TIME.map(([label, x]) => (
              <span key={label + x} className="absolute top-0 -translate-x-1/2" style={{ left: x - 66 }}>
                {label}
              </span>
            ))}
            <div className="absolute top-0 left-[2506px] flex h-[24px] w-[112px] items-center justify-center gap-[10px] rounded-b-[1px] bg-[#ff0000] text-[12.5px] text-white">
              <span>29 Sep '21</span>
              <span>16:36</span>
            </div>
          </div>
          <div className="flex w-[68px] shrink-0 items-center justify-center border-l border-[#7b7e88]">
            <CornerBadge label="A" />
          </div>
          <div className="flex w-[63px] shrink-0 items-center justify-center border-l border-[#7b7e88]">
            <CornerBadge label="B" />
          </div>
        </section>
      </main>

      <footer className="flex flex-1 items-center gap-[3px] pl-[10px] text-[13px] text-[#c3c6ce]">
        <TvLogo />
        <span>TradingView</span>
      </footer>
    </div>
  );
}
